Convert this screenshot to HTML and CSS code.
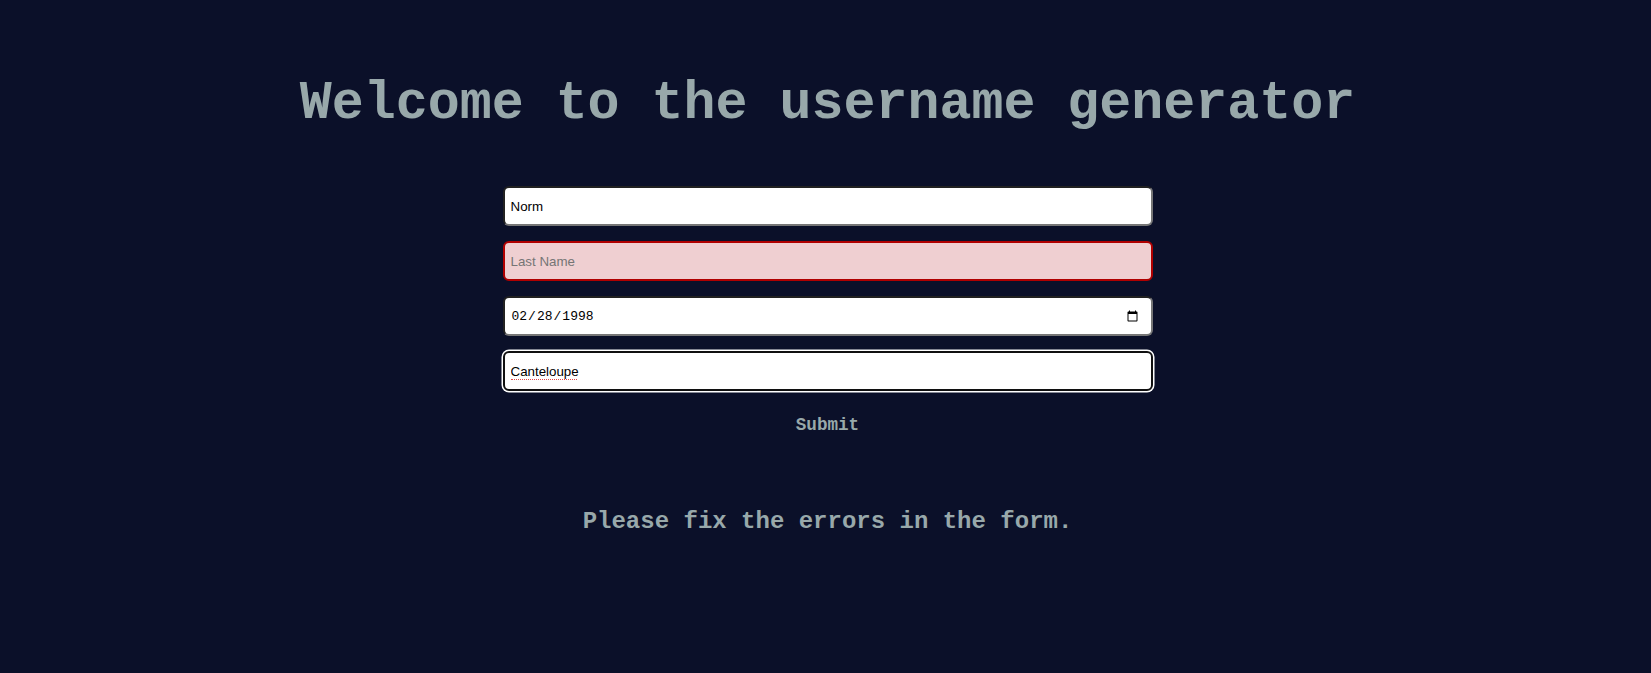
FILE: index.html
```html
<!DOCTYPE html>
<html lang="en">
<head>
<meta charset="utf-8">
<title>Username generator</title>
<link rel="stylesheet" href="styles.css">
</head>
<body>
<main class="page">
  <h1 class="title">Welcome to the username generator</h1>
  <form class="form">
    <input class="field" type="text" placeholder="First Name" value="Norm">
    <input class="field field-error" type="text" placeholder="Last Name" value="">
    <input class="field field-date" type="date" value="1998-02-28">
    <div class="field-wrap spell">
      <input class="field field-focus" type="text" placeholder="Favorite Fruit" value="Canteloupe">
    </div>
    <button class="submit" type="button">Submit</button>
  </form>
  <p class="message">Please fix the errors in the form.</p>
</main>
</body>
</html>
```

FILE: styles.css
```css
html, body {
  margin: 0;
  background: #0b1029;
}

body {
  min-height: 673px;
  font-family: "Liberation Mono", "Courier New", monospace;
  color: #98a8aa;
}

.page {
  padding: 74px 0 0 4px;
}

.title {
  margin: 0;
  font-size: 53.3px;
  line-height: 60px;
  font-weight: bold;
  text-align: center;
  white-space: nowrap;
}

.form {
  width: 650px;
  margin: 52px auto 0;
  display: flex;
  flex-direction: column;
  align-items: center;
  gap: 15px;
}

.field-wrap {
  position: relative;
  width: 100%;
  display: flex;
}

.spell::after {
  content: "";
  position: absolute;
  left: 8px;
  top: 28px;
  width: 66px;
  border-bottom: 1.5px dotted #e04848;
  pointer-events: none;
}

.field {
  box-sizing: border-box;
  width: 100%;
  height: 40px;
  margin: 0;
  padding: 0 6px;
  border: 2px inset #767676;
  border-radius: 6px;
  background: #ffffff;
  color: #000000;
  font-family: "Liberation Sans", Arial, sans-serif;
  font-size: 13.33px;
  line-height: 15px;
  outline: none;
}

.field::placeholder {
  color: #757575;
}

.field-error {
  border: 2px solid #b00000;
  background: #efcfd1;
}

.field-date {
  font-family: "Liberation Mono", monospace;
  font-size: 13px;
  padding-right: 10px;
}

.field-focus {
  border: 2px solid #101010;
  box-shadow: 0 0 0 1.5px #ffffff;
}

.submit {
  margin-top: 9px;
  padding: 0 6px;
  border: 0;
  background: transparent;
  color: #98a8aa;
  font-family: "Liberation Mono", "Courier New", monospace;
  font-weight: bold;
  font-size: 17.6px;
  line-height: 20px;
  cursor: pointer;
}

.message {
  margin: 73px 0 0;
  font-size: 24px;
  line-height: 27px;
  font-weight: bold;
  text-align: center;
}
```
